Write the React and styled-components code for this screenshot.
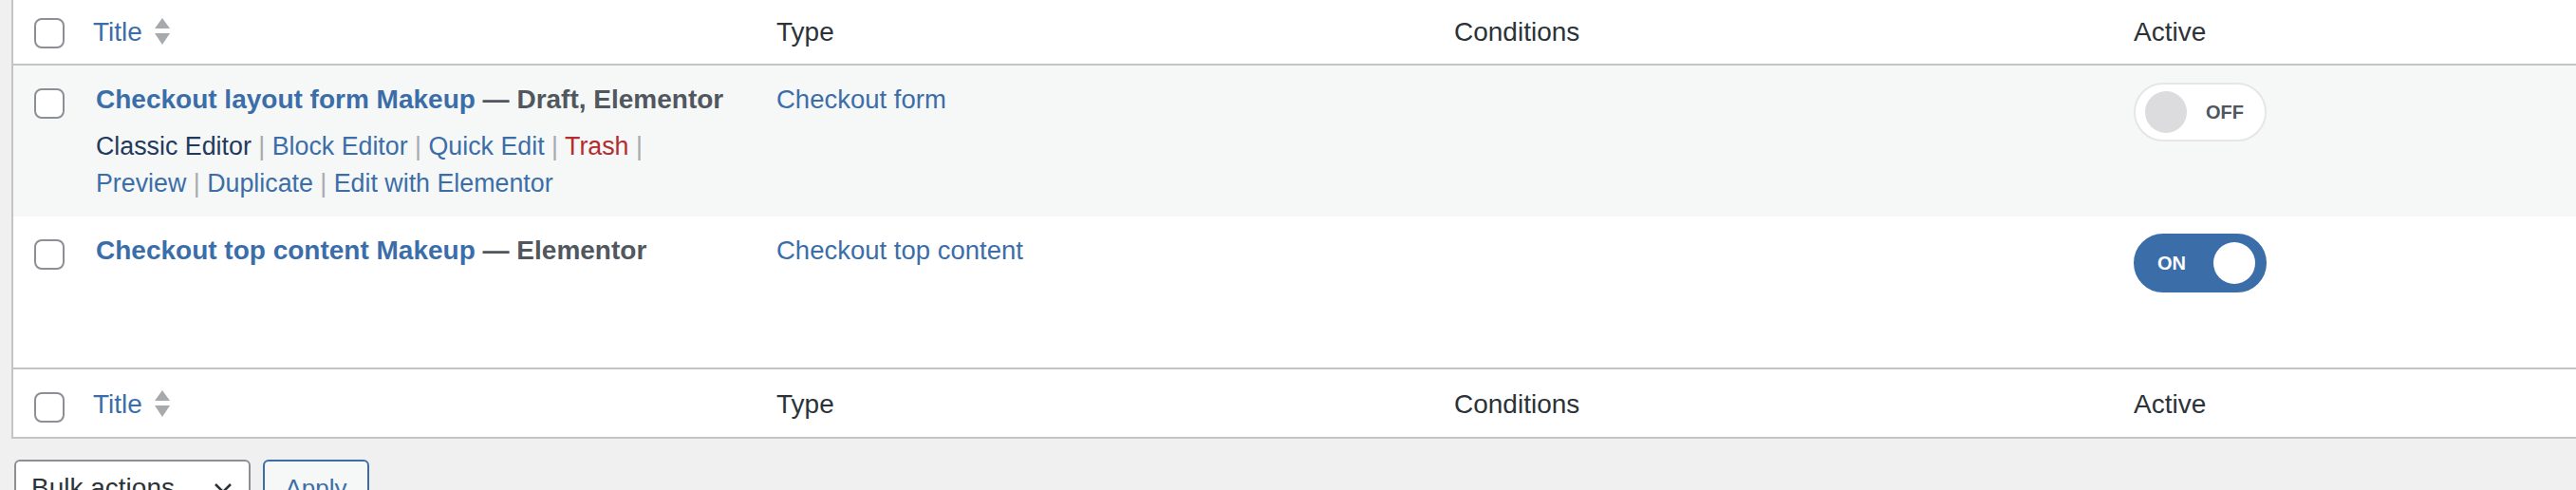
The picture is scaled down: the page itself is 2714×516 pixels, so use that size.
import React from 'react';
import styled, { createGlobalStyle, css } from 'styled-components';

const GlobalStyle = createGlobalStyle`
  body {
    margin: 0;
    background: #f0f0f1;
    font-family: "Liberation Sans", Arial, sans-serif;
    color: #2c3338;
    overflow: hidden;
  }
`;

const BLUE = '#3b6ea8';

const Page = styled.div`
  padding-left: 12px;
`;

const ListTable = styled.table`
  width: 100%;
  table-layout: fixed;
  border-collapse: separate;
  border-spacing: 0;
  background: #fff;
  border-left: 2px solid #c3c4c7;
  border-bottom: 2px solid #c3c4c7;
`;

const HeadCell = styled.th`
  text-align: left;
  vertical-align: top;
  font-weight: 400;
  font-size: 28px;
  line-height: 40px;
  color: #2c3338;
  padding: ${(p) => (p.$foot ? '17px 20px 14px' : '14px 20px 13px')};
  ${(p) =>
    p.$foot
      ? css`
          border-top: 2px solid #c3c4c7;
        `
      : css`
          border-bottom: 2px solid #c3c4c7;
        `}
  ${(p) =>
    p.$check &&
    css`
      padding: ${p.$foot ? '24px 0 0 22px' : '19px 0 0 22px'};
    `}
`;

const Row = styled.tr`
  background: ${(p) => (p.$alt ? '#f6f7f7' : '#fff')};
`;

const Cell = styled.td`
  vertical-align: top;
  padding: 16px 20px 15px;
  ${(p) =>
    p.$title &&
    css`
      padding-left: 23px;
    `}
  ${(p) =>
    p.$check &&
    css`
      padding: 24px 0 0 22px;
    `}
  ${(p) =>
    p.$toggle &&
    css`
      padding: 18px 20px 0;
    `}
`;

const Checkbox = styled.input.attrs({ type: 'checkbox' })`
  appearance: none;
  display: block;
  margin: 0;
  width: 32px;
  height: 32px;
  box-sizing: border-box;
  border: 2px solid #8c8f94;
  border-radius: 8px;
  background: #fff;
`;

const SortLink = styled.a`
  display: inline-flex;
  align-items: center;
  gap: 13px;
  color: ${BLUE};
  text-decoration: none;
`;

const SortIcon = () => (
  <svg width="16" height="30" viewBox="0 0 16 30">
    <polygon points="0,11 8,0 16,11" fill="#a7aaad" />
    <polygon points="0,16 16,16 8,28" fill="#a7aaad" />
  </svg>
);

const RowTitle = styled.div`
  font-size: 28px;
  line-height: 40px;
  font-weight: 700;
  white-space: nowrap;
`;

const TitleLink = styled.a`
  color: ${BLUE};
  text-decoration: none;
`;

const PostState = styled.span`
  color: #50575e;
`;

const RowActions = styled.div`
  margin-top: 10px;
  max-width: 620px;
  font-size: 26.8px;
  line-height: 39px;
  color: #a7aaad;
  visibility: ${(p) => (p.$hidden ? 'hidden' : 'visible')};
`;

const Action = styled.span`
  white-space: nowrap;
`;

const ActionLink = styled.a`
  text-decoration: none;
  color: ${(p) => (p.$tone === 'danger' ? '#b32d2e' : p.$tone === 'dark' ? '#1f3a5c' : BLUE)};
`;

const TypeLink = styled.a`
  display: block;
  font-size: 27.5px;
  line-height: 40px;
  color: ${BLUE};
  text-decoration: none;
`;

const Toggle = styled.button`
  display: flex;
  align-items: center;
  box-sizing: border-box;
  width: 140px;
  height: 62px;
  padding: 0 10px;
  border-radius: 31px;
  border: 2px solid ${(p) => (p.$on ? BLUE : '#e6e6e7')};
  background: ${(p) => (p.$on ? BLUE : '#fff')};
  font-family: inherit;
  cursor: pointer;
`;

const Knob = styled.span`
  width: 44px;
  height: 44px;
  border-radius: 50%;
  background: ${(p) => (p.$on ? '#fff' : '#dcdcde')};
  margin-left: ${(p) => (p.$on ? 'auto' : '0')};
`;

const ToggleLabel = styled.span`
  font-size: 20px;
  font-weight: 700;
  color: ${(p) => (p.$on ? '#fff' : '#50575e')};
  margin-left: ${(p) => (p.$on ? '13px' : '20px')};
`;

const TableNav = styled.div`
  display: flex;
  gap: 13px;
  margin-top: 22px;
  padding-left: 3px;
`;

const BulkSelect = styled.div`
  display: flex;
  align-items: center;
  box-sizing: border-box;
  width: 249px;
  height: 60px;
  padding: 0 17px 0 16px;
  border: 2px solid #8c8f94;
  border-radius: 6px;
  background: #fff;
  font-size: 28px;
  color: #2c3338;
  & svg {
    margin-left: auto;
  }
`;

const ApplyButton = styled.button`
  box-sizing: border-box;
  width: 112px;
  height: 60px;
  padding: 0 20px;
  border: 2px solid ${BLUE};
  border-radius: 6px;
  background: #f6f7f7;
  color: ${BLUE};
  font-family: inherit;
  font-size: 26px;
`;

const actions = [
  { label: 'Classic Editor', tone: 'dark' },
  { label: 'Block Editor' },
  { label: 'Quick Edit' },
  { label: 'Trash', tone: 'danger' },
  { label: 'Preview' },
  { label: 'Duplicate' },
  { label: 'Edit with Elementor' },
];

const rows = [
  { id: 1, title: 'Checkout layout form Makeup', state: 'Draft, Elementor', type: 'Checkout form', active: false, alt: true, showActions: true },
  { id: 2, title: 'Checkout top content Makeup', state: 'Elementor', type: 'Checkout top content', active: true, alt: false, showActions: false },
];

const HeaderRow = ({ foot }) => (
  <tr>
    <HeadCell $check $foot={foot}>
      <Checkbox />
    </HeadCell>
    <HeadCell $foot={foot}>
      <SortLink href="#">
        Title
        <SortIcon />
      </SortLink>
    </HeadCell>
    <HeadCell $foot={foot}>Type</HeadCell>
    <HeadCell $foot={foot}>Conditions</HeadCell>
    <HeadCell $foot={foot}>Active</HeadCell>
  </tr>
);

const App = () => {
  return (
    <Page>
      <GlobalStyle />
      <ListTable>
        <colgroup>
          <col style={{ width: 64 }} />
          <col style={{ width: 720 }} />
          <col style={{ width: 714 }} />
          <col style={{ width: 716 }} />
          <col />
        </colgroup>
        <thead>
          <HeaderRow />
        </thead>
        <tbody>
          {rows.map((row) => (
            <Row key={row.id} $alt={row.alt}>
              <Cell $check>
                <Checkbox />
              </Cell>
              <Cell $title>
                <RowTitle>
                  <TitleLink href="#">{row.title}</TitleLink>
                  <PostState> — {row.state}</PostState>
                </RowTitle>
                <RowActions $hidden={!row.showActions}>
                  {actions.map((a, i) => (
                    <React.Fragment key={a.label}>
                      <Action>
                        <ActionLink href="#" $tone={a.tone}>
                          {a.label}
                        </ActionLink>
                        {i < actions.length - 1 && ' |'}
                      </Action>{' '}
                    </React.Fragment>
                  ))}
                </RowActions>
              </Cell>
              <Cell>
                <TypeLink href="#">{row.type}</TypeLink>
              </Cell>
              <Cell></Cell>
              <Cell $toggle>
                <Toggle $on={row.active}>
                  {row.active ? (
                    <>
                      <ToggleLabel $on>ON</ToggleLabel>
                      <Knob $on />
                    </>
                  ) : (
                    <>
                      <Knob />
                      <ToggleLabel>OFF</ToggleLabel>
                    </>
                  )}
                </Toggle>
              </Cell>
            </Row>
          ))}
        </tbody>
        <tfoot>
          <HeaderRow foot />
        </tfoot>
      </ListTable>
      <TableNav>
        <BulkSelect>
          Bulk actions
          <svg width="20" height="12" viewBox="0 0 20 12">
            <polyline points="2,2 10,10 18,2" fill="none" stroke="#2c3338" strokeWidth="2.5" />
          </svg>
        </BulkSelect>
        <ApplyButton>Apply</ApplyButton>
      </TableNav>
    </Page>
  );
};

export default App;
